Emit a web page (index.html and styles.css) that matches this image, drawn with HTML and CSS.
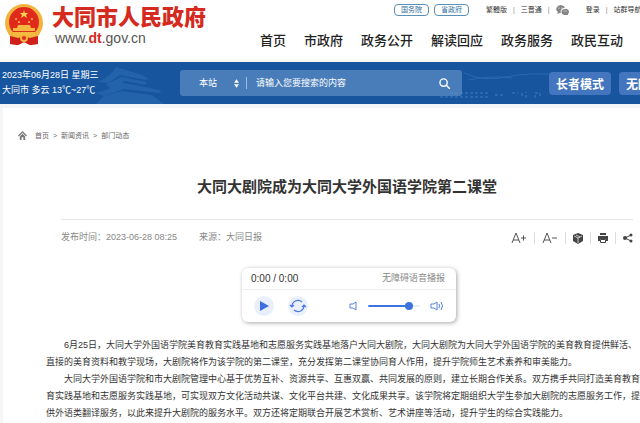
FILE: index.html
```html
<!DOCTYPE html>
<html lang="zh-CN">
<head>
    <meta charset="UTF-8">
    <meta name="viewport" content="width=device-width, initial-scale=1.0">
    <title>大同大剧院成为大同大学外国语学院第二课堂</title>
    <link rel="stylesheet" href="styles.css">
</head>
<body>

    <header class="header">
        <a class="brand" href="#">
            <svg class="emblem" viewBox="0 0 40 42" aria-hidden="true">
                <path d="M8 31h24l1 9-7 1-6-3-6 3-7-1z" fill="#dc2a1e"/>
                <circle cx="20" cy="19" r="19" fill="#f0b53c"/>
                <circle cx="20" cy="18" r="15" fill="#e02a1c"/>
                <path d="M20 6l1 3h3l-2 2 1 3-3-2-3 2 1-3-2-2h3z" fill="#f8cf50"/>
                <g fill="#f5b942">
                    <circle cx="12" cy="15" r="1"/><circle cx="15" cy="18" r="1"/>
                    <circle cx="28" cy="15" r="1"/><circle cx="25" cy="18" r="1"/>
                    <path d="M14 21h12l1 3h4v3H9v-3h4z"/>
                    <path d="M8 28h24l-4 5H12z"/>
                </g>
                <path d="M6 32l8 2 6-2 6 2 8-2v8l-8 1-6-3-6 3-8-1z" fill="#cf2019"/>
                <circle cx="20" cy="34" r="4" fill="#f0b53c"/>
                <circle cx="20" cy="34" r="2" fill="#e02a1c"/>
            </svg>
            <span class="brand-text">
                <span class="brand-name">大同市人民政府</span>
                <span class="brand-url">www.<b>dt</b>.gov.cn</span>
            </span>
        </a>
        <div class="header-right">
            <div class="top-links">
                <a class="pill" href="#">国务院</a>
                <a class="pill" href="#">省政府</a>
                <a class="lang" href="#">繁體版</a>
                <i>|</i>
                <a href="#">三晋通</a>
                <i>|</i>
                <a class="wechat" href="#" aria-label="微信">
                    <svg viewBox="0 0 13 10" fill="#858585">
                        <path d="M5 0a5 4 0 0 0-3 7L1 9l3-1h1a4 3.500 0 0 1 4-5A5 4 0 0 0 5 0z"/>
                        <path d="M9 4a4 3 0 1 0 1 6l2 0v-1a3 3 0 0 0-3-5z"/>
                        <g fill="#fff"><circle cx="3" cy="3" r=".6"/><circle cx="6" cy="3" r=".6"/><circle cx="8" cy="6" r=".5"/><circle cx="10" cy="6" r=".5"/></g>
                    </svg>
                </a>
                <a class="login" href="#">登录</a>
                <i>|</i>
                <a href="#">站群导航</a>
            </div>
            <nav class="nav">
                <a href="#">首页</a>
                <a href="#">市政府</a>
                <a href="#">政务公开</a>
                <a href="#">解读回应</a>
                <a href="#">政务服务</a>
                <a href="#">政民互动</a>
            </nav>
        </div>
    </header>

    <div class="banner">
        <svg class="scene" viewBox="0 0 640 42" preserveAspectRatio="xMinYMid slice" aria-hidden="true">
            <g fill="#2f70b6" opacity=".5">
                <path d="M98 20q12-5 18-15l26 8 7 4-3 1-26-5-12 8z"/>
                <path d="M106 22l16-7 25 5-2 3-20-4-15 7z"/>
                <path d="M96 31q14-3 22-11l32 6 12 3-3 2-35-4-20 7z"/>
                <path d="M104 34l18-5 30 4 12 9h-68z"/>
            </g>
            <g fill="none" stroke="#3472b5" opacity=".7">
                <path d="M464 11q20 9 42 4t58-2M468 18q24-5 44-2"/>
                <path d="M440 35h50M495 33h8M512 31h6m4 0v5m4 0v-6m9 6v-5h5v5M450 31h38" stroke-width="2" stroke-dasharray="3 2"/>
            </g>
        </svg>
        <div class="weather">
            <div>2023年06月28日 星期三</div>
            <div>大同市 多云 13℃~27℃</div>
        </div>
        <form class="search">
            <select aria-label="搜索范围">
                <option>本站</option>
            </select>
            <svg class="arrows" viewBox="0 0 6 10" fill="#fff" aria-hidden="true"><path d="M3 0l3 4H0zM3 10L0 6h6z"/></svg>
            <input type="text" aria-label="搜索" placeholder="请输入您要搜索的内容">
            <button type="button" aria-label="搜索">
                <svg viewBox="0 0 12 12" fill="none" stroke="#fff" stroke-width="1.500"><circle cx="5" cy="5" r="4"/><path d="M8 8l4 4"/></svg>
            </button>
        </form>
        <button class="mode" type="button">长者模式</button>
        <button class="mode" type="button">无障碍</button>
    </div>

    <main class="page">
        <nav class="crumbs">
            <svg viewBox="0 0 10 10" aria-hidden="true"><path d="M5 0L0 5l1 1 4-4 4 4 1-1zM5 3L2 6v4h2V7h2v3h2V6z" fill="#777"/></svg>
            <a href="#">首页</a>
            <span>&gt;</span>
            <a href="#">新闻资讯</a>
            <span>&gt;</span>
            <a href="#">部门动态</a>
        </nav>

        <h1>大同大剧院成为大同大学外国语学院第二课堂</h1>

        <div class="meta">
            <span>发布时间：2023-06-28 08:25</span>
            <span>来源：大同日报</span>
            <div class="tools">
                <button type="button" aria-label="放大"><svg class="letter" viewBox="0 0 16 12" fill="none" stroke="#555"><path d="M1 11L5 1l4 10M2 8h6M10 6h5M12.500 3.500v5"/></svg></button>
                <button type="button" aria-label="缩小"><svg class="letter" viewBox="0 0 16 12" fill="none" stroke="#555"><path d="M1 11L5 1l4 10M2 8h6M10 6h5"/></svg></button>
                <button type="button" aria-label="收藏"><svg viewBox="0 0 10 12"><path d="M5 1l5 2v6l-5 3-5-3V3z" fill="#444"/><path d="M1 4l4 2 4-2M5 6v5M3 3l4 2" fill="none" stroke="#fff" stroke-width=".7"/></svg></button>
                <button type="button" aria-label="打印"><svg viewBox="0 0 10 12"><path d="M2 1h6v2H2zM0 4h10v5H8V7H2v2H0z" fill="#444"/><path d="M2.500 7.500h5v3h-5z" fill="none" stroke="#444"/></svg></button>
                <button type="button" aria-label="分享"><svg viewBox="0 0 10 12" fill="#444"><path d="M8 3L2 6l6 3" fill="none" stroke="#444"/><circle cx="2" cy="6" r="2"/><circle cx="8" cy="3" r="1.500"/><circle cx="8" cy="9" r="1.500"/></svg></button>
            </div>
        </div>

        <section class="player">
            <div class="player-top">
                <span class="time">0:00 / 0:00</span>
                <span>无障碍语音播报</span>
            </div>
            <div class="player-bar">
                <button class="round" type="button" aria-label="播放"><svg viewBox="0 0 20 20"><path d="M6 5l9 5-9 5z" fill="#3d6fe0"/></svg></button>
                <button class="round" type="button" aria-label="重播"><svg viewBox="0 0 20 20" fill="none" stroke="#4a78dc" stroke-width="1.200"><path d="M4 11a6 6 0 0 1 10-5M16 9a6 6 0 0 1-10 5M2 9l2 2 2-2M14 11l2-2 2 2"/></svg></button>
                <svg class="vol low" viewBox="0 0 14 12" fill="none" stroke="#5582dc" aria-hidden="true"><path d="M4 4h3l3-2v8L7 8H4z"/></svg>
                <input type="range" min="0" max="100" value="84" aria-label="音量">
                <svg class="vol" viewBox="0 0 14 12" fill="none" stroke="#5582dc" aria-hidden="true"><path d="M1 4h3l3-2v8L4 8H1zM9 4q1 2 0 4M11 2q3 4 0 8"/></svg>
            </div>
        </section>

        <article class="article">
            <p>6月25日，大同大学外国语学院美育教育实践基地和志愿服务实践基地落户大同大剧院，大同大剧院为大同大学外国语学院的美育教育提供鲜活、直接的美育资料和教学现场，大剧院将作为该学院的第二课堂，充分发挥第二课堂协同育人作用，提升学院师生艺术素养和审美能力。</p>
            <p>大同大学外国语学院和市大剧院管理中心基于优势互补、资源共享、互惠双赢、共同发展的原则，建立长期合作关系。双方携手共同打造美育教育育实践基地和志愿服务实践基地，可实现双方文化活动共谋、文化平台共建、文化成果共享。该学院将定期组织大学生参加大剧院的志愿服务工作，提供外语类翻译服务，以此来提升大剧院的服务水平。双方还将定期联合开展艺术赏析、艺术讲座等活动，提升学生的综合实践能力。</p>
        </article>
    </main>

</body>
</html>
```

FILE: styles.css
```css
* {
    box-sizing: border-box;
}
body {
    margin: 0;
    font-family: "Liberation Sans", "Noto Sans CJK SC", sans-serif;
    font-size: 9px;
    line-height: 15px;
    color: #333;
    background-color: #f4f5f7;
    overflow-x: hidden;
}
a {
    color: inherit;
    text-decoration: none;
}
button {
    border: none;
    padding: 0;
    background: none;
    font-family: inherit;
    cursor: pointer;
}
svg {
    display: block;
}

/* header */
.header {
    display: flex;
    height: 62px;
    background: #fff;
    border-bottom: 3px solid #fbf8f3;
    white-space: nowrap;
}
.brand {
    display: flex;
    flex: 0 0 260px;
    padding: 4px 0 0 4px;
    gap: 8px;
}
.emblem {
    width: 40px;
    height: 42px;
}
.brand-text {
    display: flex;
    flex-direction: column;
    padding-top: 1px;
}
.brand-name {
    font-size: 22px;
    line-height: 26px;
    font-weight: 900;
    color: #d42a20;
}
.brand-url {
    padding-left: 3px;
    font-size: 14px;
    line-height: 14px;
    color: #555;
}
.brand-url b {
    color: #d42a20;
}
.top-links {
    display: flex;
    align-items: center;
    gap: 5px;
    height: 20px;
    padding-left: 134px;
    font-size: 7px;
    line-height: 10px;
}
.top-links i {
    margin: 0 1px;
    font-style: normal;
    color: #888;
}
.pill {
    padding: 0 6px;
    border: 1px solid #5b8fb5;
    border-radius: 4px;
    color: #2c6a9c;
}
.lang {
    margin-left: 12px;
}
.wechat svg {
    width: 13px;
    height: 10px;
}
.login {
    margin-left: 12px;
}
.nav {
    display: flex;
    gap: 18px;
    padding-top: 11px;
    font-size: 13px;
    line-height: 20px;
    font-weight: 500;
    color: #222;
}

/* blue banner */
.banner {
    position: relative;
    display: flex;
    align-items: center;
    height: 42px;
    background: #17569f;
    color: #fff;
    white-space: nowrap;
    overflow: hidden;
}
.scene {
    position: absolute;
    left: 0;
    top: 0;
    width: 100%;
    height: 100%;
}
.weather {
    position: relative;
    flex: 0 0 180px;
    padding-left: 2px;
}
.search {
    position: relative;
    display: flex;
    align-items: center;
    flex: 1 0 282px;
    height: 26px;
    padding: 0 12px 0 19px;
    background: rgba(105, 151, 204, 0.6);
    border-radius: 3px;
}
.search select {
    width: 35px;
    padding: 0;
    border: none;
    background: none;
    appearance: none;
    color: #fff;
    font-family: inherit;
    font-size: 9px;
}
.search option {
    color: #333;
}
.arrows {
    width: 5px;
    height: 9px;
}
.search input {
    flex: 1;
    min-width: 0;
    height: 12px;
    margin-left: 7px;
    padding: 0 0 0 9px;
    border: none;
    border-left: 1px solid #9dbce0;
    background: none;
    color: #fff;
    font-family: inherit;
    font-size: 9px;
    outline: none;
}
.search input::placeholder {
    color: #fff;
}
.search button svg {
    width: 11px;
    height: 11px;
}
.mode {
    position: relative;
    flex: none;
    height: 23px;
    margin-left: 8px;
    padding: 0 7px;
    border-radius: 4px;
    background: #4475bf;
    color: #fff;
    font-size: 12px;
    font-weight: bold;
}
.search + .mode {
    margin-left: 87px;
}

/* content */
.page {
    margin: 4px 0 0 3px;
    padding: 19px 0 8px 15px;
    background: #fff;
}
.crumbs {
    display: flex;
    align-items: center;
    gap: 4px;
    height: 16px;
    font-size: 7px;
    color: #666;
}
.crumbs svg {
    width: 9px;
    height: 9px;
    margin-right: 4px;
}
h1 {
    margin: 33px 7px 21px 43px;
    font-size: 15px;
    line-height: 22px;
    text-align: center;
    color: #333;
}
.meta {
    display: flex;
    align-items: center;
    gap: 22px;
    height: 36px;
    margin: 0 7px 0 43px;
    border-top: 1px solid #e6e6e6;
    color: #888;
    white-space: nowrap;
}
.tools {
    display: flex;
    align-items: center;
    margin-left: auto;
}
.tools button {
    height: 12px;
    padding: 0 7px;
    border-right: 1px solid #ddd;
}
.tools button:last-child {
    padding-right: 0;
    border: none;
}
.tools svg {
    width: 10px;
    height: 12px;
}
.tools .letter {
    width: 16px;
}

/* voice player */
.player {
    width: 214px;
    margin: 13px auto 0;
    border-radius: 6px;
    box-shadow: 1px 1px 4px rgba(0, 0, 0, 0.35);
}
@media (min-width: 400px) {
    .player {
        margin-left: calc(50% - 87px);
    }
}
.player-top {
    display: flex;
    align-items: center;
    justify-content: space-between;
    height: 22px;
    padding: 0 11px 0 9px;
    border-bottom: 1px solid #eee;
    color: #888;
}
.time {
    font-size: 10px;
    color: #333;
}
.player-bar {
    display: flex;
    align-items: center;
    height: 32px;
    padding: 0 12px;
}
.round {
    width: 20px;
    height: 20px;
    margin-right: 14px;
    border-radius: 50%;
    background: #e9effc;
}
.vol {
    width: 14px;
    height: 12px;
}
.vol.low {
    margin-left: 24px;
}
.player input {
    appearance: none;
    flex: 1;
    min-width: 0;
    height: 2px;
    margin: 0 10px 0 8px;
    border-radius: 1px;
    background: linear-gradient(to right, #3d74df 80%, #e9eefa 80%);
}
.player input::-webkit-slider-thumb {
    appearance: none;
    width: 8px;
    height: 8px;
    border-radius: 50%;
    background: #3d74df;
}

.article {
    margin: 15px 0 0 28px;
    line-height: 17px;
    color: #333;
}
.article p {
    margin: 0;
    text-indent: 2em;
}
```
